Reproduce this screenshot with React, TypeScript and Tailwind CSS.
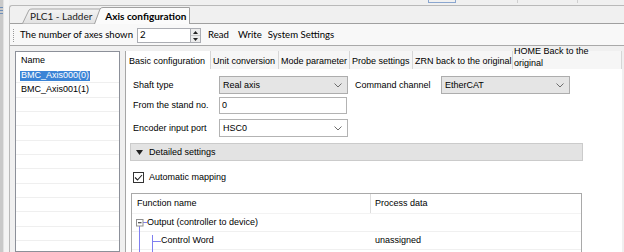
import React from "react";

function Chevron() {
  return (
    <svg width="8" height="5" viewBox="0 0 8 5" className="shrink-0">
      <path d="M0.5 0.5 L4 4 L7.5 0.5" fill="none" stroke="#6d6d6d" strokeWidth="1" />
    </svg>
  );
}

function Select({ value, gray }: { value: string; gray?: boolean }) {
  return (
    <div
      className={
        gray
          ? "h-[18px] w-[129px] flex items-center justify-between pl-[3px] pr-[5px] border border-[#adadad] bg-[#e5e5e5]"
          : "h-[18px] w-[129px] flex items-center justify-between pl-[3px] pr-[5px] border border-[#b3b3b3] bg-white"
      }
    >
      <span>{value}</span>
      <Chevron />
    </div>
  );
}

const BLUE = "#7f7ff0";

export default function App() {
  const listRows = Array.from({ length: 13 });
  return (
    <div className="w-[624px] h-[252px] overflow-hidden bg-[#f0f0f0] flex text-black">
      {/* left sliver */}
      <div className="w-[9px] h-full flex shrink-0">
        <div className="w-[3px] h-full bg-[#c9c9c9] pt-[7px]">
          <svg width="3" height="7" viewBox="0 0 3 7">
            <rect x="0" y="0" width="3" height="1" fill="#6f8fb8" />
            <rect x="0" y="3" width="3" height="1" fill="#6f8fb8" />
            <rect x="0" y="6" width="3" height="1" fill="#6f8fb8" />
          </svg>
        </div>
        <div className="flex-1 h-full bg-[#f4f4f4] border-l border-[#e2e2e2]" />
      </div>

      <div className="flex-1 flex flex-col min-w-0">
        {/* top strip */}
        <div className="h-[5px] relative">
          <div className="absolute left-[419px] top-0 w-[28px] h-[3px] border border-t-0 border-[#8aa6cf]" />
          <div className="absolute left-[508px] top-0 w-[1px] h-[3px] bg-[#d0d0d0]" />
          <div className="absolute left-[568px] top-0 w-[1px] h-[3px] bg-[#d0d0d0]" />
        </div>

        <div className="flex-1 flex flex-col border-l border-t border-[#b9b9b9] rounded-tl-[3px] min-h-0">
          {/* document tabs */}
          <div className="h-[18px] relative border-b border-[#a0a0a0] font-['Lato',sans-serif] text-[10px] shrink-0">
            <svg className="absolute left-0 top-0" width="200" height="18" viewBox="0 0 200 18">
              <defs>
                <linearGradient id="tg" x1="0" y1="0" x2="0" y2="1">
                  <stop offset="0" stopColor="#f4f4f4" />
                  <stop offset="1" stopColor="#e1e1e1" />
                </linearGradient>
              </defs>
              <path d="M12.5 17.5 L19 4 Q20 3 22 3 L92 3 L92 17.5" fill="url(#tg)" stroke="#a5a5a5" strokeWidth="1" />
              <path d="M84.5 18 L90 3 Q91 1.5 93 1.5 L179.5 1.5 L179.5 18" fill="#fbfbfb" stroke="#a0a0a0" strokeWidth="1" />
            </svg>
            <div className="relative flex items-center h-full pt-[3px]">
              <span className="ml-[20px] text-[#222]">PLC1 - Ladder</span>
              <span className="ml-[13px] font-bold">Axis configuration</span>
            </div>
          </div>

          {/* toolbar */}
          <div className="h-[22px] shrink-0 border-b border-[#a9a9a9] bg-[#f8f8f8] flex items-center font-['Lato',sans-serif] text-[9.6px] pt-[2px]">
            <svg className="ml-[3px] shrink-0" width="2" height="13" viewBox="0 0 2 13">
              {[0, 2, 4, 6, 8, 10, 12].map((y) => (
                <rect key={y} x="0" y={y} width="1" height="1" fill="#9a9a9a" />
              ))}
            </svg>
            <span className="ml-[5px]">The number of axes shown</span>
            <div className="ml-[4px] flex h-[15px]">
              <div className="w-[54px] h-full border border-[#abadb3] bg-white pl-[2px] flex items-center">2</div>
              <div className="w-[10px] h-full border border-l-0 border-[#abadb3] bg-[#ececec] flex flex-col">
                <div className="flex-1 flex items-center justify-center border-b border-[#c8c8c8]">
                  <svg width="5" height="3" viewBox="0 0 5 3"><path d="M0 3 L2.5 0 L5 3 Z" fill="#222" /></svg>
                </div>
                <div className="flex-1 flex items-center justify-center">
                  <svg width="5" height="3" viewBox="0 0 5 3"><path d="M0 0 L2.5 3 L5 0 Z" fill="#222" /></svg>
                </div>
              </div>
            </div>
            <span className="ml-[7px]">Read</span>
            <span className="ml-[9px]">Write</span>
            <span className="ml-[6px]">System Settings</span>
          </div>

          {/* main area */}
          <div className="flex-1 flex pl-[5px] pt-[5px] min-h-0 font-['Liberation_Sans',Arial,sans-serif] text-[9px] leading-none">
            {/* list */}
            <div className="w-[105px] shrink-0 border border-[#8c9099] bg-white flex flex-col overflow-hidden">
              <div className="h-[17px] shrink-0 flex items-center pl-[5px]">Name</div>
              {listRows.map((_, i) => (
                <div key={i} className="h-[14.33px] shrink-0 border-b border-[#efefef] flex items-center pl-[4px]">
                  {i === 0 ? (
                    <span className="bg-[#3b84d6] text-white px-[1px] h-[10px] flex items-center">BMC_Axis000(0)</span>
                  ) : i === 1 ? (
                    <span className="px-[1px]">BMC_Axis001(1)</span>
                  ) : null}
                </div>
              ))}
            </div>

            {/* right panel */}
            <div className="ml-[5px] w-[497px] shrink-0 flex flex-col min-h-0">
              {/* tabs */}
              <div className="h-[18px] shrink-0 flex bg-[#ececec] border-l border-[#a6a6a6]">
                <div className="w-[84px] h-full bg-white flex items-center pl-[3px] pt-[2px]">Basic configuration</div>
                <div className="w-[68px] h-full bg-[#f6f6f6] border-l border-[#d6d6d6] flex items-center pl-[2px] pt-[2px]">Unit conversion</div>
                <div className="w-[71px] h-full bg-[#f6f6f6] border-l border-[#d6d6d6] flex items-center pl-[2px] pt-[2px]">Mode parameter</div>
                <div className="w-[63px] h-full bg-[#f6f6f6] border-l border-[#d6d6d6] flex items-center pl-[2px] pt-[2px]">Probe settings</div>
                <div className="w-[100px] h-full bg-[#f6f6f6] border-l border-[#d6d6d6] flex items-center pl-[2px] pt-[2px]">ZRN back to the original</div>
                <div className="w-[110px] h-full bg-[#f6f6f6] border-l border-[#d6d6d6] border-r flex flex-col justify-end pl-[1px] leading-[12px]">
                  <span>HOME Back to the</span>
                  <span>original</span>
                </div>
              </div>

              {/* content */}
              <div className="flex-1 bg-white border-l border-[#a6a6a6] flex flex-col pt-[7px] min-h-0">
                <div className="h-[18px] flex items-center pl-[7px]">
                  <span className="w-[86px]">Shaft type</span>
                  <Select value="Real axis" gray />
                  <span className="ml-[7px] w-[86px]">Command channel</span>
                  <Select value="EtherCAT" gray />
                </div>
                <div className="mt-[3px] h-[17px] flex items-center pl-[7px]">
                  <span className="w-[86px]">From the stand no.</span>
                  <div className="h-[17px] w-[128px] border border-[#b3b3b3] bg-white flex items-center pl-[2px]">0</div>
                </div>
                <div className="mt-[5px] h-[18px] flex items-center pl-[7px]">
                  <span className="w-[86px]">Encoder input port</span>
                  <Select value="HSC0" />
                </div>

                <div className="mt-[6px] ml-[4px] w-[453px] h-[18px] shrink-0 bg-[#e3e3e3] border border-[#cbcbcb] flex items-center">
                  <svg className="ml-[5px]" width="7" height="5" viewBox="0 0 7 5"><path d="M0 0 L7 0 L3.5 5 Z" fill="#222" /></svg>
                  <span className="ml-[6px]">Detailed settings</span>
                </div>

                <div className="mt-[11px] h-[11px] shrink-0 flex items-center pl-[7px]">
                  <div className="w-[11px] h-[11px] border border-[#333] bg-white flex items-center justify-center">
                    <svg width="9" height="7" viewBox="0 0 9 7"><path d="M1 3.5 L3.5 6 L8 1" fill="none" stroke="#222" strokeWidth="1.1" /></svg>
                  </div>
                  <span className="ml-[5px]">Automatic mapping</span>
                </div>

                {/* table */}
                <div className="mt-[10px] ml-[5px] w-[451px] flex-1 border border-[#a9a9a9] border-b-0 flex flex-col min-h-0">
                  <div className="h-[20px] shrink-0 flex border-b border-[#f3f3f3]">
                    <div className="w-[239px] h-full border-r border-[#dcdcdc] flex items-center pl-[5px]">Function name</div>
                    <div className="flex-1 flex items-center pl-[4px]">Process data</div>
                  </div>
                  <div className="h-[18px] shrink-0 flex border-b border-[#f0f0f0]">
                    <div className="w-[239px] h-full flex items-center">
                      <svg width="15" height="18" viewBox="0 0 15 18" className="shrink-0">
                        <line x1="7.5" y1="12" x2="7.5" y2="18" stroke={BLUE} strokeWidth="1" />
                        <line x1="11" y1="8.5" x2="15" y2="8.5" stroke={BLUE} strokeWidth="1" />
                        <rect x="4.5" y="5.5" width="6.5" height="6.5" fill="white" stroke="#8f8f8f" strokeWidth="1" />
                        <line x1="6" y1="8.75" x2="9.5" y2="8.75" stroke="#222" strokeWidth="1" />
                      </svg>
                      <span>Output (controller to device)</span>
                    </div>
                    <div className="flex-1" />
                  </div>
                  <div className="h-[18px] shrink-0 flex border-b border-[#f0f0f0]">
                    <div className="w-[239px] h-full flex items-center">
                      <svg width="29" height="18" viewBox="0 0 29 18" className="shrink-0">
                        <line x1="7.5" y1="0" x2="7.5" y2="18" stroke={BLUE} strokeWidth="1" />
                        <line x1="20.5" y1="3" x2="20.5" y2="18" stroke={BLUE} strokeWidth="1" />
                        <line x1="20.5" y1="9.5" x2="29" y2="9.5" stroke={BLUE} strokeWidth="1" />
                      </svg>
                      <span>Control Word</span>
                    </div>
                    <div className="flex-1 flex items-center pl-[4px]">unassigned</div>
                  </div>
                  <div className="h-[18px] shrink-0 flex">
                    <div className="w-[239px] h-full flex items-center">
                      <svg width="29" height="18" viewBox="0 0 29 18" className="shrink-0">
                        <line x1="7.5" y1="0" x2="7.5" y2="18" stroke={BLUE} strokeWidth="1" />
                        <line x1="20.5" y1="0" x2="20.5" y2="18" stroke={BLUE} strokeWidth="1" />
                      </svg>
                    </div>
                  </div>
                </div>
              </div>
            </div>
          </div>
        </div>
      </div>
    </div>
  );
}
